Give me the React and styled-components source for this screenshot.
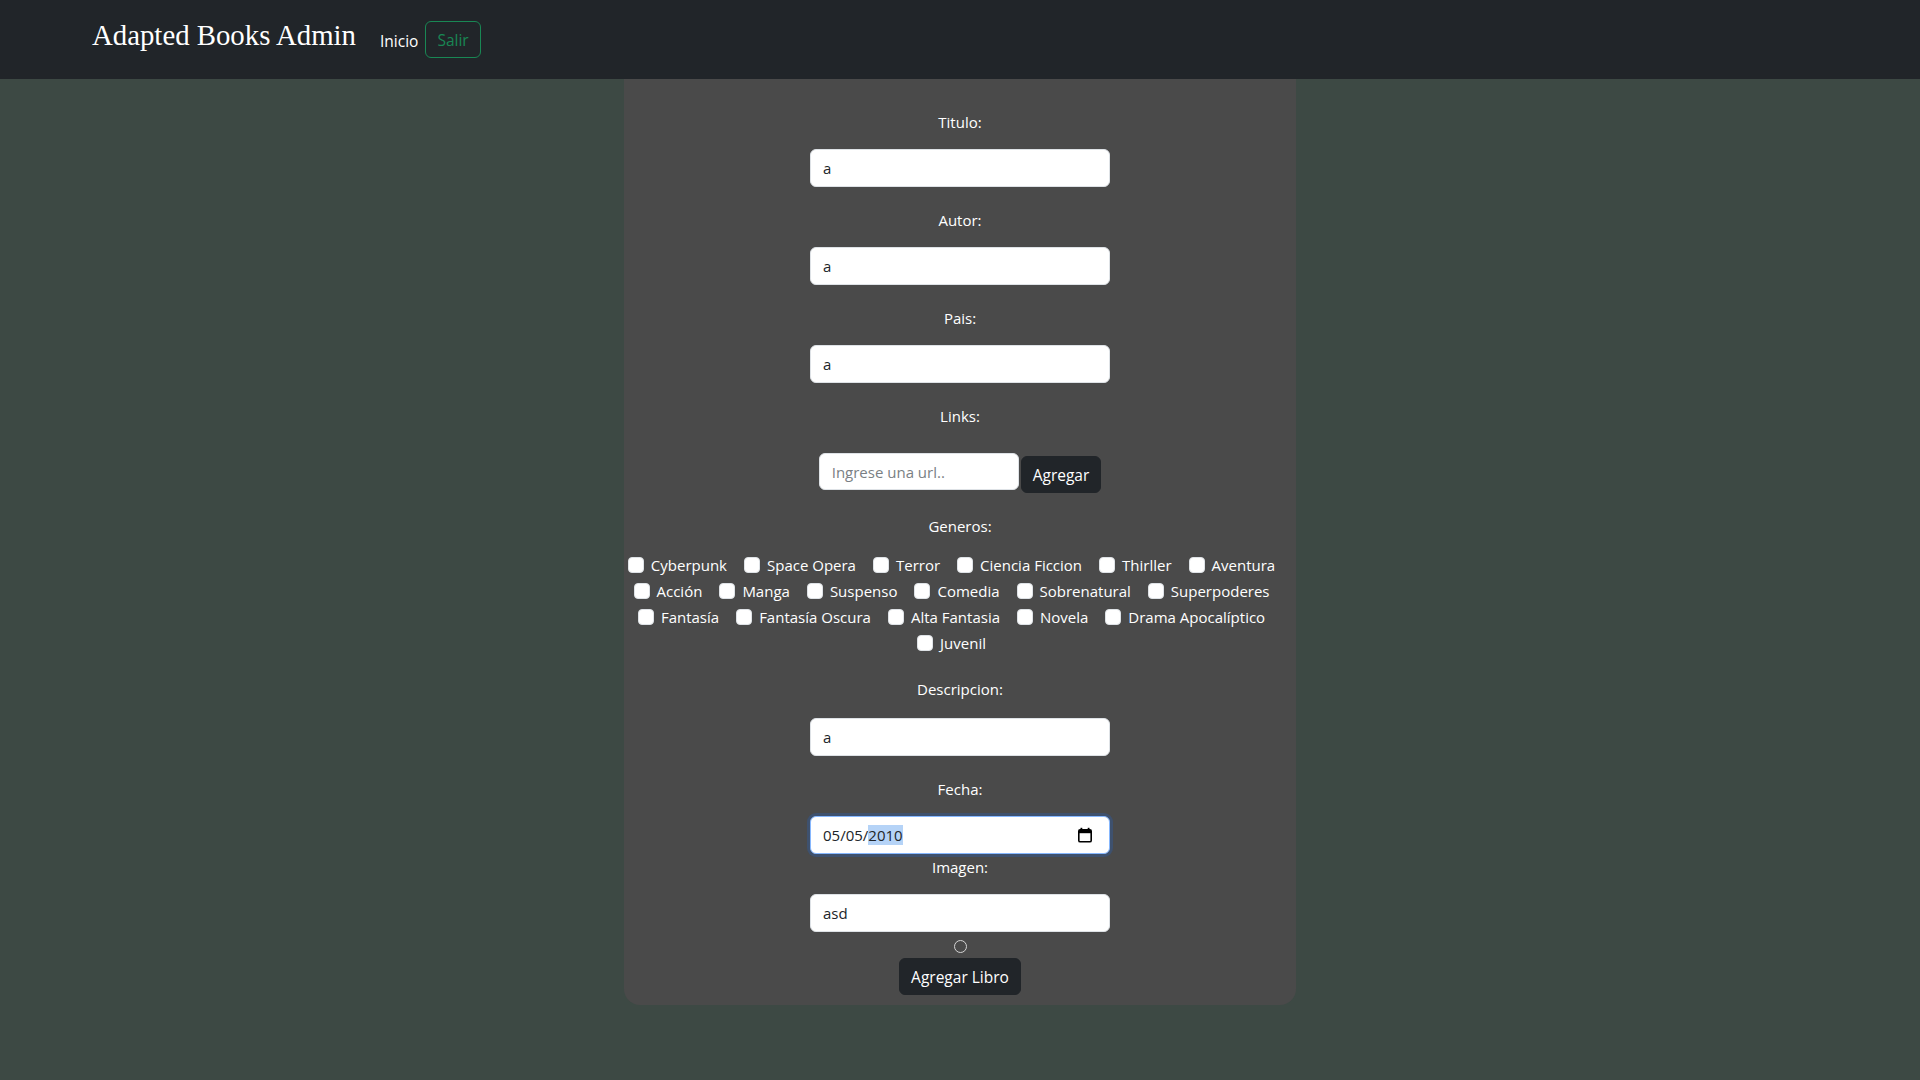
import { createGlobalStyle, styled } from "styled-components";

const GlobalStyle = createGlobalStyle`
  body {
    margin: 0;
    background-color: #3d4944;
    font-family: "Open Sans", "Liberation Sans", sans-serif;
    font-size: 15px;
    color: #ffffff;
    min-height: 100vh;
  }
  * {
    box-sizing: border-box;
  }
`;

// 장르 목록 (줄 단위로 나눠둠)
const genreRows = [
  ["Cyberpunk", "Space Opera", "Terror", "Ciencia Ficcion", "Thirller", "Aventura"],
  ["Acción", "Manga", "Suspenso", "Comedia", "Sobrenatural", "Superpoderes"],
  ["Fantasía", "Fantasía Oscura", "Alta Fantasia", "Novela", "Drama Apocalíptico"],
  ["Juvenil"],
];

const CalendarIcon = () => (
  <svg width="16" height="16" viewBox="0 0 16 16">
    <rect x="3.5" y="0.8" width="1.8" height="2.6" fill="#000" />
    <rect x="10.7" y="0.8" width="1.8" height="2.6" fill="#000" />
    <rect x="1.8" y="2.8" width="12.4" height="12" rx="1.4" fill="none" stroke="#000" strokeWidth="1.6" />
    <rect x="1.8" y="2.8" width="12.4" height="3.4" fill="#000" />
  </svg>
);

const App = () => {
  return (
    <>
      <GlobalStyle />
      <Navbar>
        <Brand>Adapted Books Admin</Brand>
        <NavLink>Inicio</NavLink>
        <OutlineButton>Salir</OutlineButton>
      </Navbar>
      <Card>
        <Label>Titulo:</Label>
        <TextInput defaultValue="a" />
        <Label>Autor:</Label>
        <TextInput defaultValue="a" />
        <Label>Pais:</Label>
        <TextInput defaultValue="a" />
        <Label>Links:</Label>
        <LinkRow>
          <LinkInput placeholder="Ingrese una url.." />
          <DarkButton $offset={3}>Agregar</DarkButton>
        </LinkRow>
        <Label>Generos:</Label>
        <GenreBox>
          {genreRows.map((row, i) => (
            <GenreRow key={i}>
              {row.map((g) => (
                <GenreItem key={g}>
                  <CheckBox type="checkbox" />
                  {g}
                </GenreItem>
              ))}
            </GenreRow>
          ))}
        </GenreBox>
        <Label $gap={17}>Descripcion:</Label>
        <TextInput defaultValue="a" />
        <Label>Fecha:</Label>
        <DateField>
          <span>
            05/05/<Selected>2010</Selected>
          </span>
          <CalendarIcon />
        </DateField>
        <Label>Imagen:</Label>
        <TextInput defaultValue="asd" $tight />
        <Radio type="radio" />
        <DarkButton>Agregar Libro</DarkButton>
      </Card>
    </>
  );
};
export default App;

const Navbar = styled.nav`
  display: flex;
  align-items: center;
  height: 79px;
  padding-left: 92px;
  background-color: #212529;
`;

const Brand = styled.div`
  font-family: "Liberation Serif", "Times New Roman", serif;
  font-size: 28.8px;
  color: #ffffff;
  margin-right: 24px;
  margin-top: -9px;
`;

const NavLink = styled.span`
  color: #ffffff;
  font-size: 15.5px;
  margin-right: 7px;
  margin-top: 2px;
`;

const OutlineButton = styled.button`
  font-family: inherit;
  font-size: 15.5px;
  color: #198754;
  background: transparent;
  border: 1px solid #198754;
  border-radius: 6px;
  height: 37px;
  padding: 0 11px;
`;

const Card = styled.main`
  width: 672px;
  margin: 0 auto;
  padding: 31px 4px 10px;
  background-color: #4a4a4a;
  border-radius: 0 0 16px 16px;
  display: flex;
  flex-direction: column;
  align-items: center;
`;

const Label = styled.label`
  display: block;
  line-height: 24px;
  margin-bottom: ${(p) => p.$gap || 15}px;
  color: #ffffff;
`;

const TextInput = styled.input`
  width: 300px;
  height: 38px;
  padding: 0 12px;
  font-family: inherit;
  font-size: 15px;
  color: #212529;
  background: #ffffff;
  border: 1px solid #dee2e6;
  border-radius: 6px;
  margin-bottom: ${(p) => (p.$tight ? "0" : "21px")};
  outline: none;
`;

const DateField = styled.div`
  width: 300px;
  height: 38px;
  padding: 0 16px 0 12px;
  display: flex;
  align-items: center;
  justify-content: space-between;
  color: #212529;
  background: #ffffff;
  border: 1px solid #86b7fe;
  border-radius: 6px;
  box-shadow: 0 0 0 3px rgba(13, 110, 253, 0.2);
  margin-bottom: 1px;
`;

const Selected = styled.span`
  background-color: #b5d3f7;
`;

const LinkRow = styled.div`
  display: flex;
  align-items: flex-start;
  gap: 2px;
  margin-top: 10px;
  margin-bottom: 21px;
`;

const LinkInput = styled.input`
  width: 200px;
  height: 37px;
  padding: 0 12px;
  font-family: inherit;
  font-size: 15px;
  background: #ffffff;
  border: 1px solid #dee2e6;
  border-radius: 6px;
  outline: none;
  &::placeholder {
    color: #7a7f84;
  }
`;

const DarkButton = styled.button`
  font-family: inherit;
  font-size: 15.5px;
  color: #ffffff;
  background-color: #212529;
  border: 1px solid #212529;
  border-radius: 6px;
  height: 37px;
  padding: 0 11px;
  margin-top: ${(p) => p.$offset || 0}px;
`;

const GenreBox = styled.div`
  display: flex;
  flex-direction: column;
  margin-top: -1px;
  margin-bottom: 21px;
`;

const GenreRow = styled.div`
  display: flex;
  justify-content: center;
  gap: 17px;
  height: 26px;
  align-items: center;
  padding-right: 17px;
`;

const GenreItem = styled.label`
  display: inline-flex;
  align-items: center;
  gap: 7px;
  color: #ffffff;
  white-space: nowrap;
`;

const CheckBox = styled.input`
  appearance: none;
  margin: 0;
  width: 16px;
  height: 16px;
  background: #ffffff;
  border: 1px solid #dee2e6;
  border-radius: 4px;
`;

const Radio = styled.input`
  appearance: none;
  margin: 8px 0 5px;
  width: 13px;
  height: 13px;
  border: 1.5px solid #d4d4d4;
  border-radius: 50%;
  background: transparent;
`;
